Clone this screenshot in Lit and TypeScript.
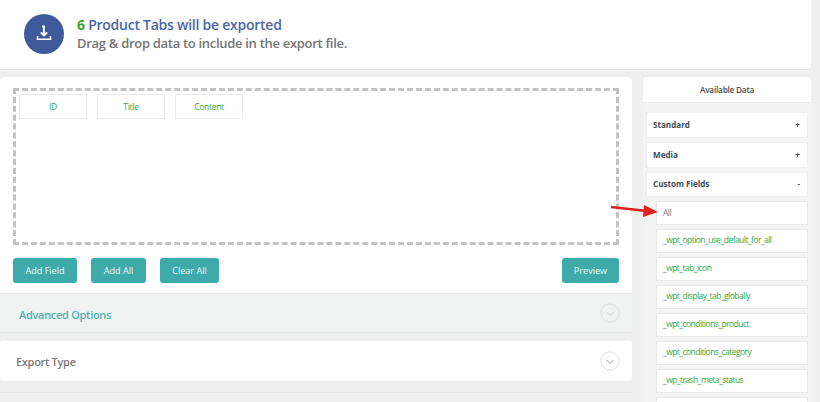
import { LitElement, html, css, svg } from 'lit';
import { customElement } from 'lit/decorators.js';

const chevron = svg`<path d="M7 10l4 3.5 4-3.5" fill="none" stroke="currentColor" stroke-width="1.3" />`;

@customElement('app-root')
export class AppRoot extends LitElement {
  static styles = css`
    :host {
      display: block;
      position: relative;
      width: 820px;
      height: 402px;
      overflow: hidden;
      background: #efefef;
      font-family: 'Open Sans', sans-serif;
    }

    .top {
      box-sizing: border-box;
      width: 811px;
      height: 70px;
      background: #fff;
      border-bottom: 1px solid #e6e6e6;
      border-radius: 0 0 4px 0;
      display: flex;
      align-items: center;
      gap: 13px;
      padding: 0 0 2px 24px;
    }

    .badge {
      width: 40px;
      height: 40px;
      border-radius: 50%;
      background: #3e5a9a;
      display: flex;
      align-items: center;
      justify-content: center;
    }

    .headline {
      font-size: 14px;
      font-weight: 600;
      letter-spacing: -0.25px;
      line-height: 18px;
      color: #4a67a5;
    }

    .headline b {
      color: #3fa52f;
      font-weight: 700;
    }

    .sub {
      font-size: 13px;
      font-weight: 600;
      letter-spacing: -0.3px;
      line-height: 18px;
      color: #757575;
    }

    .columns {
      display: flex;
      gap: 11px;
      margin-top: 7px;
      width: 811px;
    }

    .main {
      width: 632px;
      flex: none;
    }

    .editor {
      box-sizing: border-box;
      height: 216px;
      background: #fff;
      border-radius: 4px 4px 0 0;
      padding: 11px 13px 0;
    }

    .drop {
      box-sizing: border-box;
      height: 157px;
      border: 3px dashed #c2c2c2;
      padding: 3px;
      display: flex;
      gap: 10px;
      align-items: flex-start;
    }

    .chip {
      box-sizing: border-box;
      width: 68px;
      height: 25px;
      border: 1px solid #e9e9e9;
      padding-bottom: 1px;
      display: flex;
      align-items: center;
      justify-content: center;
      font-size: 8.5px;
      letter-spacing: -0.3px;
      color: #38a838;
    }

    .actions {
      display: flex;
      gap: 14px;
      margin-top: 13px;
    }

    .btn {
      box-sizing: border-box;
      height: 25px;
      padding: 0;
      border: 0;
      border-radius: 3px;
      background: #3faaaa;
      color: #eef8f8;
      font-family: inherit;
      font-size: 9.1px;
      font-weight: 400;
    }

    .preview {
      margin-left: auto;
    }

    .section {
      box-sizing: border-box;
      height: 40px;
      display: flex;
      align-items: center;
      justify-content: space-between;
      padding: 0 12px 0 16px;
      font-size: 11px;
      font-weight: 600;
      letter-spacing: -0.3px;
    }

    .advanced {
      background: #f0f1f1;
      border-top: 1px solid #e8e8e8;
      border-bottom: 1px solid #e8e8e8;
      color: #4fb3b3;
      padding-left: 19px;
    }

    .advanced span {
      padding-top: 2px;
    }

    .advanced svg {
      color: #dedede;
    }

    .export {
      margin-top: 8px;
      background: #fff;
      border-radius: 3px;
      color: #7a7a7a;
    }

    .export svg {
      color: #bbb;
    }

    .rule {
      height: 1px;
      margin-top: 11px;
      background: #e6e6e6;
    }

    .side {
      width: 168px;
      flex: none;
      height: 340px;
      background: #f4f4f4;
      border-radius: 4px 4px 0 0;
    }

    .side-head {
      height: 25px;
      margin-bottom: 9px;
      background: #fff;
      border-bottom: 1px solid #ececec;
      border-radius: 4px 4px 0 0;
      display: flex;
      align-items: center;
      justify-content: center;
      font-size: 8.2px;
      font-weight: 600;
      letter-spacing: -0.2px;
      color: #4a4a4a;
    }

    .rows {
      display: flex;
      flex-direction: column;
      gap: 4px;
      padding: 0 3px;
    }

    .group {
      box-sizing: border-box;
      height: 26px;
      background: #fff;
      border: 1px solid #eeeeee;
      display: flex;
      align-items: center;
      justify-content: space-between;
      padding: 0 7px 2px 6px;
      font-size: 8.1px;
      font-weight: 700;
      color: #444b55;
    }

    .group.open {
      height: 25px;
    }

    .field {
      box-sizing: border-box;
      height: 24px;
      margin-left: 10px;
      background: #fff;
      border: 1px solid #e8e8e8;
      display: flex;
      align-items: center;
      padding: 0 6px 3px;
      font-size: 8.5px;
      letter-spacing: -0.55px;
      color: #38a838;
    }

    .field.all {
      padding-bottom: 2px;
      color: #808080;
    }

    .arrow {
      position: absolute;
      left: 608px;
      top: 200px;
    }
  `;

  render() {
    const fields = [
      '_wpt_option_use_default_for_all',
      '_wpt_tab_icon',
      '_wpt_display_tab_globally',
      '_wpt_conditions_product',
      '_wpt_conditions_category',
      '_wp_trash_meta_status',
      '',
    ];

    return html`
      <div class="top">
        <div class="badge">
          <svg width="18" height="18" viewBox="0 0 18 18" fill="none" stroke="#fff" stroke-width="1.8">
            <path d="M7 1.5h2v8.5M5.8 7.4L9 10.5l3.2-3.1" />
            <path d="M2.5 11v3.2h13V11" stroke-width="1.6" />
          </svg>
        </div>
        <div>
          <div class="headline"><b>6</b> Product Tabs will be exported</div>
          <div class="sub">Drag &amp; drop data to include in the export file.</div>
        </div>
      </div>

      <div class="columns">
        <div class="main">
          <div class="editor">
            <div class="drop">
              <div class="chip">ID</div>
              <div class="chip">Title</div>
              <div class="chip">Content</div>
            </div>
            <div class="actions">
              <button class="btn" style="width:64px">Add Field</button>
              <button class="btn" style="width:55px">Add All</button>
              <button class="btn" style="width:59px">Clear All</button>
              <button class="btn preview" style="width:57px">Preview</button>
            </div>
          </div>
          <div class="section advanced">
            <span>Advanced Options</span>
            <svg width="20" height="20" viewBox="0 0 22 22">
              <circle cx="11" cy="11" r="10" fill="none" stroke="currentColor" />
              ${chevron}
            </svg>
          </div>
          <div class="section export">
            <span>Export Type</span>
            <svg width="20" height="20" viewBox="0 0 22 22">
              <circle cx="11" cy="11" r="10" fill="none" stroke="#ddd" />
              ${chevron}
            </svg>
          </div>
          <div class="rule"></div>
        </div>

        <div class="side">
          <div class="side-head">Available Data</div>
          <div class="rows">
            <div class="group"><span>Standard</span><span>+</span></div>
            <div class="group"><span>Media</span><span>+</span></div>
            <div class="group open"><span>Custom Fields</span><span>-</span></div>
            <div class="field all">All</div>
            ${fields.map((f) => html`<div class="field">${f}</div>`)}
          </div>
        </div>
      </div>

      <svg class="arrow" width="52" height="20" viewBox="0 0 52 20">
        <path d="M3 7l36 4" stroke="#e0201f" stroke-width="2.6" fill="none" />
        <path d="M36 5l14 7-15 5z" fill="#e0201f" />
      </svg>
    `;
  }
}
